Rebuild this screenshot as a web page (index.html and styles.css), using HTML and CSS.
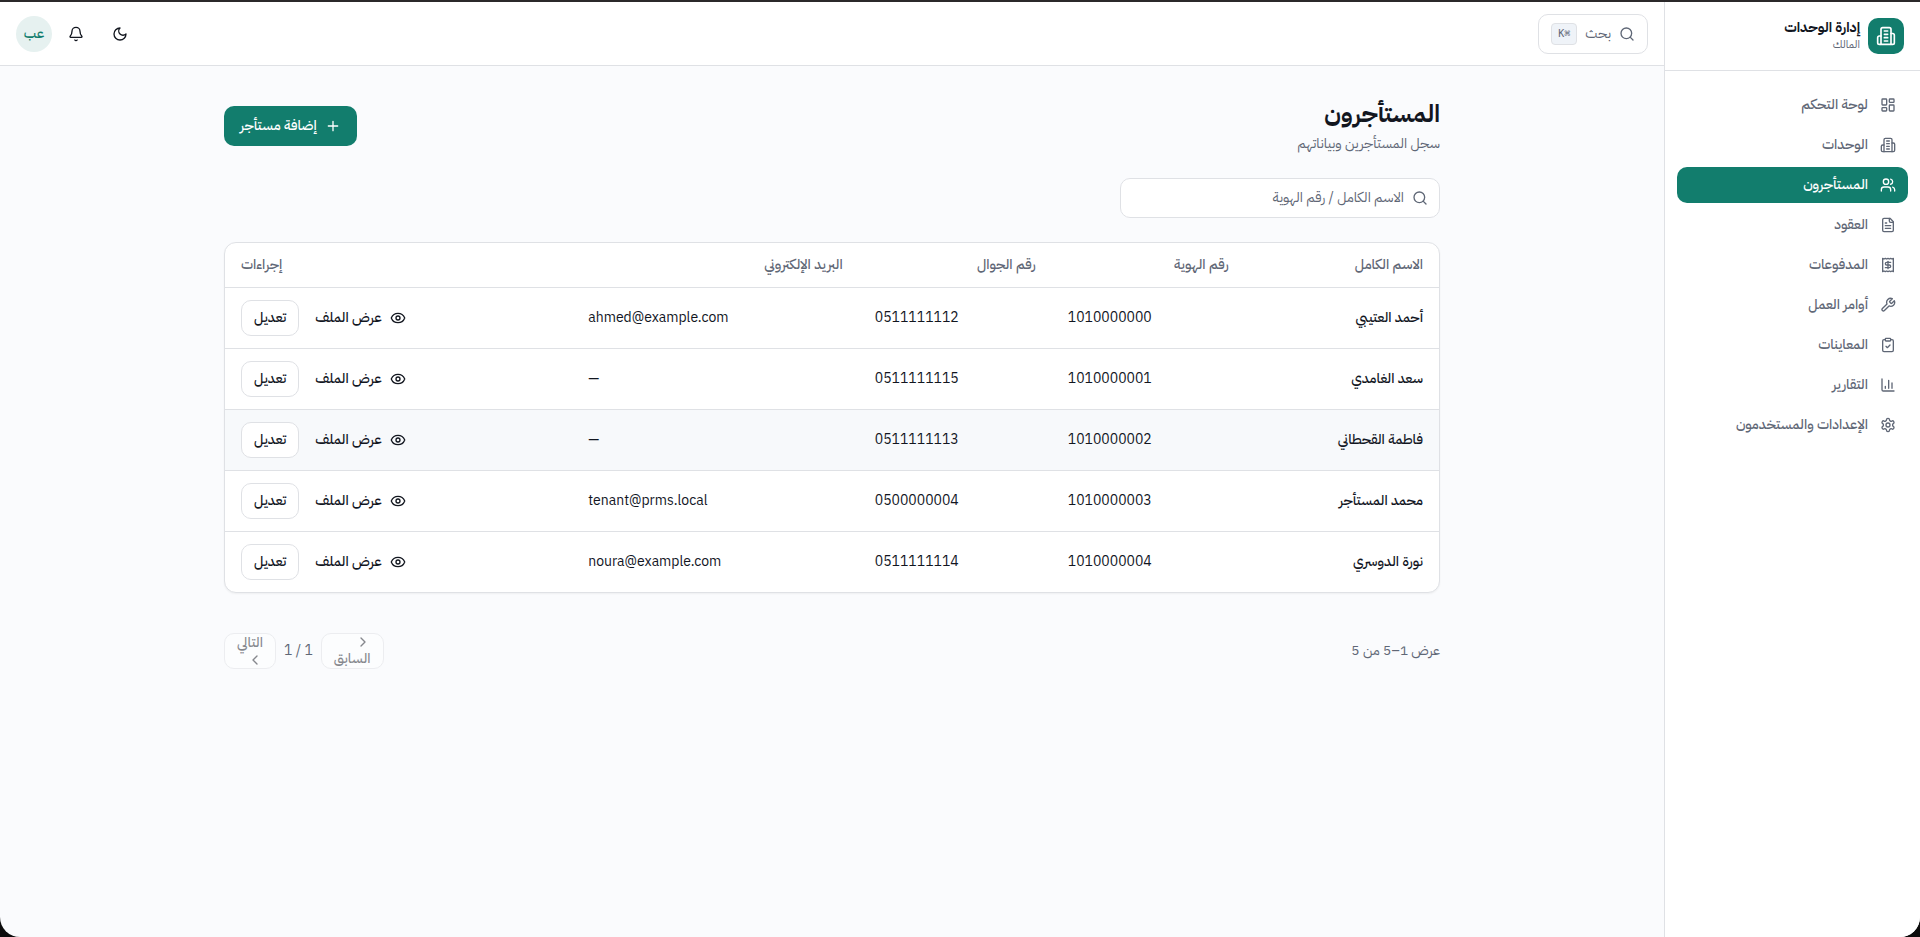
FILE: index.html
```html
<!DOCTYPE html>
<html lang="ar" dir="rtl">
<head>
    <meta charset="UTF-8">
    <meta name="viewport" content="width=device-width, initial-scale=1.0">
    <title>المستأجرون</title>
    <link rel="stylesheet" href="styles.css">
</head>
<body>
    <svg class="sprite" aria-hidden="true">
        <symbol id="i-building" viewBox="0 0 24 24"><path d="M6 22V4a2 2 0 0 1 2-2h8a2 2 0 0 1 2 2v18Z"/><path d="M6 12H4a2 2 0 0 0-2 2v6a2 2 0 0 0 2 2h2"/><path d="M18 9h2a2 2 0 0 1 2 2v9a2 2 0 0 1-2 2h-2"/><path d="M10 6h4M10 10h4M10 14h4M10 18h4"/></symbol>
        <symbol id="i-dashboard" viewBox="0 0 24 24"><rect width="7" height="9" x="3" y="3" rx="1"/><rect width="7" height="5" x="14" y="3" rx="1"/><rect width="7" height="9" x="14" y="12" rx="1"/><rect width="7" height="5" x="3" y="16" rx="1"/></symbol>
        <symbol id="i-users" viewBox="0 0 24 24"><path d="M16 21v-2a4 4 0 0 0-4-4H6a4 4 0 0 0-4 4v2"/><circle cx="9" cy="7" r="4"/><path d="M22 21v-2a4 4 0 0 0-3-3.870M16 3.130a4 4 0 0 1 0 7.750"/></symbol>
        <symbol id="i-file" viewBox="0 0 24 24"><path d="M15 2H6a2 2 0 0 0-2 2v16a2 2 0 0 0 2 2h12a2 2 0 0 0 2-2V7Z"/><path d="M14 2v4a2 2 0 0 0 2 2h4M10 9H8M16 13H8M16 17H8"/></symbol>
        <symbol id="i-receipt" viewBox="0 0 24 24"><path d="M4 2v20l2-1 2 1 2-1 2 1 2-1 2 1 2-1 2 1V2l-2 1-2-1-2 1-2-1-2 1-2-1-2 1Z"/><path d="M16 8h-6a2 2 0 1 0 0 4h4a2 2 0 1 1 0 4H8"/><path d="M12 17.500v-11"/></symbol>
        <symbol id="i-wrench" viewBox="0 0 24 24"><path d="M14.700 6.300a1 1 0 0 0 0 1.400l1.600 1.600a1 1 0 0 0 1.400 0l3.770-3.770a6 6 0 0 1-7.940 7.940l-6.910 6.910a2.120 2.120 0 0 1-3-3l6.910-6.910a6 6 0 0 1 7.940-7.940l-3.760 3.760z"/></symbol>
        <symbol id="i-clipboard" viewBox="0 0 24 24"><rect width="8" height="4" x="8" y="2" rx="1"/><path d="M16 4h2a2 2 0 0 1 2 2v14a2 2 0 0 1-2 2H6a2 2 0 0 1-2-2V6a2 2 0 0 1 2-2h2"/><path d="m9 14 2 2 4-4"/></symbol>
        <symbol id="i-chart" viewBox="0 0 24 24"><path d="M3 3v16a2 2 0 0 0 2 2h16"/><path d="M18 17V9M13 17V5M8 17v-3"/></symbol>
        <symbol id="i-settings" viewBox="0 0 24 24"><path d="M12.220 2h-.44a2 2 0 0 0-2 2v.18a2 2 0 0 1-1 1.730l-.43.25a2 2 0 0 1-2 0l-.15-.08a2 2 0 0 0-2.730.73l-.22.38a2 2 0 0 0 .73 2.730l.15.1a2 2 0 0 1 1 1.720v.51a2 2 0 0 1-1 1.740l-.15.09a2 2 0 0 0-.73 2.730l.22.38a2 2 0 0 0 2.730.73l.15-.08a2 2 0 0 1 2 0l.43.25a2 2 0 0 1 1 1.730V20a2 2 0 0 0 2 2h.44a2 2 0 0 0 2-2v-.18a2 2 0 0 1 1-1.730l.43-.25a2 2 0 0 1 2 0l.15.08a2 2 0 0 0 2.730-.73l.22-.39a2 2 0 0 0-.73-2.730l-.15-.08a2 2 0 0 1-1-1.740v-.5a2 2 0 0 1 1-1.740l.15-.09a2 2 0 0 0 .73-2.730l-.22-.38a2 2 0 0 0-2.730-.73l-.15.08a2 2 0 0 1-2 0l-.43-.25a2 2 0 0 1-1-1.730V4a2 2 0 0 0-2-2z"/><circle cx="12" cy="12" r="3"/></symbol>
        <symbol id="i-search" viewBox="0 0 24 24"><circle cx="11" cy="11" r="8"/><path d="m21 21-4.300-4.300"/></symbol>
        <symbol id="i-moon" viewBox="0 0 24 24"><path d="M12 3a6 6 0 0 0 9 9 9 9 0 1 1-9-9Z"/></symbol>
        <symbol id="i-bell" viewBox="0 0 24 24"><path d="M10.268 21a2 2 0 0 0 3.464 0"/><path d="M3.262 15.326A1 1 0 0 0 4 17h16a1 1 0 0 0 .74-1.673C19.410 13.956 18 12.499 18 8A6 6 0 0 0 6 8c0 4.499-1.411 5.956-2.738 7.326"/></symbol>
        <symbol id="i-plus" viewBox="0 0 24 24"><path d="M5 12h14M12 5v14"/></symbol>
        <symbol id="i-eye" viewBox="0 0 24 24"><path d="M2.062 12.348a1 1 0 0 1 0-.696 10.750 10.750 0 0 1 19.876 0 1 1 0 0 1 0 .696 10.750 10.750 0 0 1-19.876 0"/><circle cx="12" cy="12" r="3"/></symbol>
        <symbol id="i-right" viewBox="0 0 24 24"><path d="m9 18 6-6-6-6"/></symbol>
        <symbol id="i-left" viewBox="0 0 24 24"><path d="m15 18-6-6 6-6"/></symbol>
    </svg>

    <div class="app">
        <aside class="sidebar">
            <div class="brand">
                <span class="brand-logo"><svg class="icon icon-lg"><use href="#i-building"/></svg></span>
                <div>
                    <div class="brand-name">إدارة الوحدات</div>
                    <div class="brand-role">المالك</div>
                </div>
            </div>
            <nav class="nav">
                <a href="#"><svg class="icon"><use href="#i-dashboard"/></svg>لوحة التحكم</a>
                <a href="#"><svg class="icon"><use href="#i-building"/></svg>الوحدات</a>
                <a href="#" class="active" aria-current="page"><svg class="icon"><use href="#i-users"/></svg>المستأجرون</a>
                <a href="#"><svg class="icon"><use href="#i-file"/></svg>العقود</a>
                <a href="#"><svg class="icon"><use href="#i-receipt"/></svg>المدفوعات</a>
                <a href="#"><svg class="icon"><use href="#i-wrench"/></svg>أوامر العمل</a>
                <a href="#"><svg class="icon"><use href="#i-clipboard"/></svg>المعاينات</a>
                <a href="#"><svg class="icon"><use href="#i-chart"/></svg>التقارير</a>
                <a href="#"><svg class="icon"><use href="#i-settings"/></svg>الإعدادات والمستخدمون</a>
            </nav>
        </aside>

        <div class="content">
            <header class="topbar">
                <button type="button" class="search-button">
                    <svg class="icon"><use href="#i-search"/></svg>
                    <span>بحث</span>
                    <kbd>⌘K</kbd>
                </button>
                <div class="topbar-actions">
                    <button type="button" class="icon-button" aria-label="الوضع الداكن"><svg class="icon"><use href="#i-moon"/></svg></button>
                    <button type="button" class="icon-button" aria-label="الإشعارات"><svg class="icon"><use href="#i-bell"/></svg></button>
                    <button type="button" class="avatar">عب</button>
                </div>
            </header>

            <main class="page">
                <div class="page-header">
                    <div>
                        <h1>المستأجرون</h1>
                        <p>سجل المستأجرين وبياناتهم</p>
                    </div>
                    <button type="button" class="btn btn-primary"><svg class="icon"><use href="#i-plus"/></svg>إضافة مستأجر</button>
                </div>

                <label class="search-field">
                    <svg class="icon"><use href="#i-search"/></svg>
                    <input type="text" name="q" placeholder="الاسم الكامل / رقم الهوية" aria-label="الاسم الكامل / رقم الهوية">
                </label>

                <div class="card">
                    <table>
                        <colgroup>
                            <col class="col-name">
                            <col class="col-number">
                            <col class="col-number">
                            <col class="col-email">
                            <col>
                        </colgroup>
                        <thead>
                            <tr>
                                <th>الاسم الكامل</th>
                                <th>رقم الهوية</th>
                                <th>رقم الجوال</th>
                                <th>البريد الإلكتروني</th>
                                <th class="end">إجراءات</th>
                            </tr>
                        </thead>
                        <tbody>
                            <tr>
                                <td class="name">أحمد العتيبي</td>
                                <td dir="ltr">1010000000</td>
                                <td dir="ltr">0511111112</td>
                                <td dir="ltr">ahmed@example.com</td>
                                <td><div class="row-actions"><a href="#" class="btn btn-ghost"><svg class="icon"><use href="#i-eye"/></svg>عرض الملف</a><button type="button" class="btn btn-outline">تعديل</button></div></td>
                            </tr>
                            <tr>
                                <td class="name">سعد الغامدي</td>
                                <td dir="ltr">1010000001</td>
                                <td dir="ltr">0511111115</td>
                                <td dir="ltr">—</td>
                                <td><div class="row-actions"><a href="#" class="btn btn-ghost"><svg class="icon"><use href="#i-eye"/></svg>عرض الملف</a><button type="button" class="btn btn-outline">تعديل</button></div></td>
                            </tr>
                            <tr class="highlight">
                                <td class="name">فاطمة القحطاني</td>
                                <td dir="ltr">1010000002</td>
                                <td dir="ltr">0511111113</td>
                                <td dir="ltr">—</td>
                                <td><div class="row-actions"><a href="#" class="btn btn-ghost"><svg class="icon"><use href="#i-eye"/></svg>عرض الملف</a><button type="button" class="btn btn-outline">تعديل</button></div></td>
                            </tr>
                            <tr>
                                <td class="name">محمد المستأجر</td>
                                <td dir="ltr">1010000003</td>
                                <td dir="ltr">0500000004</td>
                                <td dir="ltr">tenant@prms.local</td>
                                <td><div class="row-actions"><a href="#" class="btn btn-ghost"><svg class="icon"><use href="#i-eye"/></svg>عرض الملف</a><button type="button" class="btn btn-outline">تعديل</button></div></td>
                            </tr>
                            <tr>
                                <td class="name">نورة الدوسري</td>
                                <td dir="ltr">1010000004</td>
                                <td dir="ltr">0511111114</td>
                                <td dir="ltr">noura@example.com</td>
                                <td><div class="row-actions"><a href="#" class="btn btn-ghost"><svg class="icon"><use href="#i-eye"/></svg>عرض الملف</a><button type="button" class="btn btn-outline">تعديل</button></div></td>
                            </tr>
                        </tbody>
                    </table>
                </div>

                <div class="pagination">
                    <span>عرض 1–5 من 5</span>
                    <div class="pager">
                        <button type="button" disabled><svg class="icon"><use href="#i-right"/></svg><span>السابق</span></button>
                        <span>1 / 1</span>
                        <button type="button" disabled><span>التالي</span><svg class="icon"><use href="#i-left"/></svg></button>
                    </div>
                </div>
            </main>
        </div>
    </div>
</body>
</html>
```

FILE: styles.css
```css
:root {
    --primary: #127d6d;
    --bg: #fafbfd;
    --border: #dfe1e5;
    --text: #12161f;
    --muted: #5f6776;
    --radius: 10px;
}
* {
    box-sizing: border-box;
}
html {
    background-color: #0c0c0c;
}
body {
    margin: 0;
    border-top: 2px solid #2b292a;
    font-family: "IBM Plex Sans Arabic", Roboto, "DejaVu Sans Condensed", "DejaVu Sans", sans-serif;
    font-size: 14px;
    line-height: 20px;
    color: var(--text);
}
button, input {
    font: inherit;
    color: inherit;
}
button {
    cursor: pointer;
}
a {
    color: inherit;
    text-decoration: none;
}
.sprite {
    display: none;
}
.icon {
    width: 16px;
    height: 16px;
    flex-shrink: 0;
    fill: none;
    stroke: currentColor;
    stroke-width: 2;
    stroke-linecap: round;
    stroke-linejoin: round;
}
.icon-lg {
    width: 20px;
    height: 20px;
}
.app {
    display: flex;
    min-height: calc(100vh - 2px);
    border-radius: 0 0 20px 20px;
    overflow: hidden;
    background-color: var(--bg);
}

/* Sidebar */
.sidebar {
    width: 256px;
    flex-shrink: 0;
    background-color: #fff;
    border-left: 1px solid var(--border);
}
.brand {
    display: flex;
    align-items: center;
    gap: 8px;
    padding: 16px;
    border-bottom: 1px solid var(--border);
}
.brand-logo {
    display: flex;
    align-items: center;
    justify-content: center;
    width: 36px;
    height: 36px;
    border-radius: var(--radius);
    background-color: var(--primary);
    color: #fff;
}
.brand-name {
    font-weight: bold;
    line-height: 18px;
}
.brand-role {
    font-size: 11px;
    line-height: 16px;
    color: var(--muted);
}
.nav {
    display: flex;
    flex-direction: column;
    gap: 4px;
    padding: 16px 12px;
}
.nav a {
    display: flex;
    align-items: center;
    gap: 12px;
    padding: 8px 12px;
    border-radius: var(--radius);
    color: var(--muted);
    font-weight: 500;
}
.nav a.active {
    background-color: var(--primary);
    color: #fff;
}

/* Top bar */
.content {
    flex: 1;
    min-width: 0;
}
.topbar {
    display: flex;
    align-items: center;
    justify-content: space-between;
    height: 64px;
    padding: 0 16px;
    background-color: #fff;
    border-bottom: 1px solid var(--border);
}
.search-button {
    display: flex;
    align-items: center;
    gap: 8px;
    height: 40px;
    padding: 0 12px;
    border: 1px solid var(--border);
    border-radius: var(--radius);
    background-color: #fff;
    color: var(--muted);
}
.search-button kbd {
    padding: 2px 6px;
    border: 1px solid var(--border);
    border-radius: 4px;
    background-color: #eff3f8;
    font-family: "DejaVu Sans Mono", monospace;
    font-size: 10px;
    line-height: 16px;
}
.topbar-actions {
    display: flex;
    align-items: center;
    gap: 4px;
}
.icon-button {
    display: flex;
    align-items: center;
    justify-content: center;
    width: 40px;
    height: 40px;
    padding: 0;
    border: none;
    background: none;
}
.avatar {
    width: 36px;
    height: 36px;
    padding: 0;
    border: none;
    border-radius: 50%;
    background-color: #e6f1f0;
    color: var(--primary);
    font-weight: 500;
}

/* Page */
.page {
    display: flex;
    flex-direction: column;
    gap: 24px;
    max-width: 1280px;
    margin: 0 auto;
    padding: 32px;
}
.page-header {
    display: flex;
    align-items: center;
    justify-content: space-between;
}
.page-header h1 {
    margin: 0 0 4px;
    font-size: 24px;
    line-height: 32px;
}
.page-header p {
    margin: 0;
    color: var(--muted);
}
.btn {
    display: flex;
    align-items: center;
    gap: 8px;
    height: 36px;
    padding: 0 12px;
    border: none;
    border-radius: var(--radius);
    font-weight: 500;
}
.btn-primary {
    height: 40px;
    padding: 0 16px;
    background-color: var(--primary);
    color: #fff;
}
.btn-outline {
    border: 1px solid var(--border);
    background-color: #fff;
}
.search-field {
    display: flex;
    align-items: center;
    gap: 8px;
    width: 320px;
    height: 40px;
    padding: 0 11px;
    border: 1px solid var(--border);
    border-radius: var(--radius);
    background-color: #fff;
    color: var(--muted);
}
.search-field input {
    flex: 1;
    min-width: 0;
    padding: 0;
    border: none;
    outline: none;
    background: none;
}
.search-field input::placeholder {
    color: var(--muted);
    opacity: 1;
}

/* Tenants table */
.card {
    border: 1px solid var(--border);
    border-radius: 12px;
    background-color: #fff;
    box-shadow: 0 1px 2px rgba(0, 0, 0, 0.05);
    overflow: hidden;
}
table {
    width: 100%;
    table-layout: fixed;
    border-collapse: separate;
    border-spacing: 0;
}
.col-name {
    width: 16%;
}
.col-number {
    width: 15.9%;
}
.col-email {
    width: 23.6%;
}
th {
    padding: 12px 16px;
    border-bottom: 1px solid var(--border);
    color: var(--muted);
    font-weight: 500;
    text-align: right;
}
th.end {
    text-align: left;
}
td {
    padding: 12px 16px;
    border-bottom: 1px solid var(--border);
}
td.name {
    font-weight: 500;
}
td[dir="ltr"] {
    text-align: left;
}
tbody tr:last-child td {
    border-bottom: none;
}
.highlight {
    background-color: #f7f9fb;
}
.row-actions {
    display: flex;
    justify-content: flex-end;
    gap: 4px;
}

/* Pagination */
.pagination {
    display: flex;
    align-items: center;
    justify-content: space-between;
    padding-top: 16px;
    color: var(--muted);
}
.pager {
    display: flex;
    align-items: center;
    gap: 8px;
}
.pager button {
    display: flex;
    flex-direction: column;
    align-items: flex-start;
    justify-content: center;
    height: 36px;
    padding: 0 12px;
    border: 1px solid var(--border);
    border-radius: var(--radius);
    background-color: #fff;
    color: var(--text);
    font-weight: 500;
    line-height: 18px;
    opacity: 0.5;
}
```
